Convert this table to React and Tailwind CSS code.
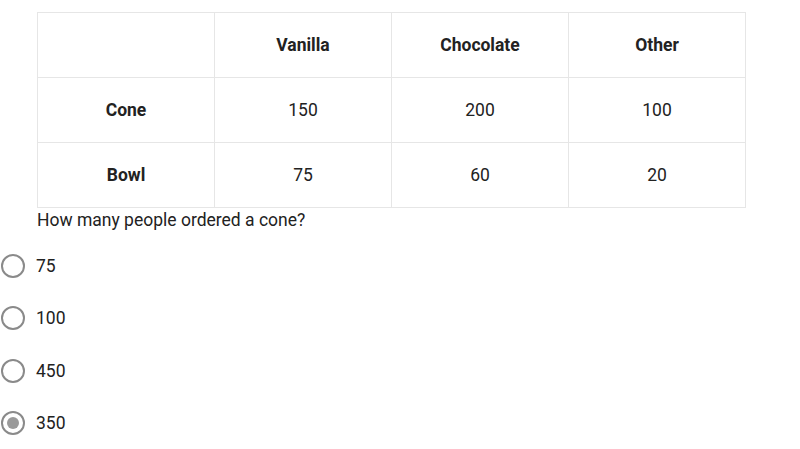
import React from "react";

const cols = ["Vanilla", "Chocolate", "Other"];
const rows = [
    {label: "Cone", values: [150, 200, 100]},
    {label: "Bowl", values: [75, 60, 20]},
];
const options = ["75", "100", "450", "350"];

function Radio({checked}) {
    return (
        <span className="w-[24px] h-[24px] rounded-full border-2 border-[#8a8a8a] flex items-center justify-center shrink-0">
            {checked && <span className="w-[12px] h-[12px] rounded-full bg-[#9a9a9a]"></span>}
        </span>
    );
}

export default function App() {
    return (
        <div className="w-[800px] h-[449px] bg-white text-[#222] font-['Roboto',sans-serif] overflow-hidden">
            <div className="pt-[12px] pl-[37px]">
                <table className="border-collapse w-[709px] table-fixed">
                    <thead>
                        <tr className="h-[65px]">
                            <th className="border border-[#e6e6e6]"></th>
                            {cols.map((c) => (
                                <th key={c} className="border border-[#e6e6e6] font-bold text-[17.5px]">{c}</th>
                            ))}
                        </tr>
                    </thead>
                    <tbody>
                        {rows.map((r) => (
                            <tr key={r.label} className="h-[65px]">
                                <td className="border border-[#e6e6e6] text-center font-bold text-[17.5px]">{r.label}</td>
                                {r.values.map((v, i) => (
                                    <td key={i} className="border border-[#e6e6e6] text-center text-[17.5px]">{v}</td>
                                ))}
                            </tr>
                        ))}
                    </tbody>
                </table>
                <p className="text-[17.5px] leading-[24px]">How many people ordered a cone?</p>
            </div>
            <div className="flex flex-col mt-[8px] pl-[1px]">
                {options.map((o, i) => (
                    <label key={o} className="flex items-center h-[52.3px] gap-[11px]">
                        <Radio checked={i === 3}/>
                        <span className="text-[17.5px]">{o}</span>
                    </label>
                ))}
            </div>
        </div>
    );
}
